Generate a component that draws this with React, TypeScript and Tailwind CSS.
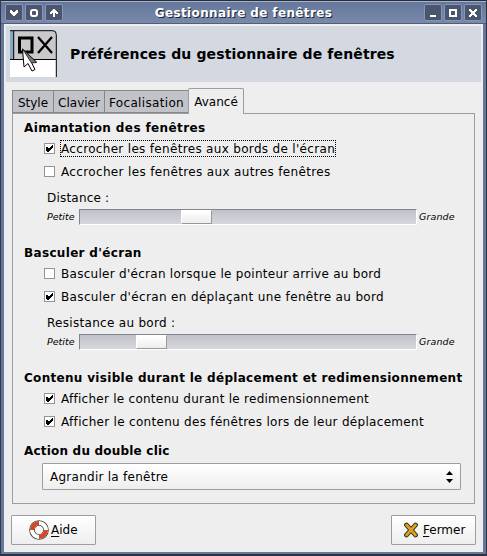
import type { ReactNode } from "react";

function TitleButton({ kind }: { kind: "down" | "ring" | "up" | "min" | "max" | "close" }) {
  return (
    <div className="flex h-[17px] w-[18px] items-center justify-center rounded-[2px] border border-[#8496bd] bg-[#4b556b]">
      <svg width="16" height="15" viewBox="0 0 16 15" fill="none" stroke="#fff" strokeWidth="2">
        {kind === "down" && <path d="M4 5h2v1h1v1h2V6h1V5h2v3h-1v1h-1v1H9v1H7v-1H6V9H5V8H4z" fill="#fff" stroke="none" />}
        {kind === "ring" && <rect x="5" y="5" width="6" height="6" rx="2" />}
        {kind === "up" && <path d="M7 4h2v1h1v1h1v1h1v2h-2V8H9v4H7V8H6v1H4V7h1V6h1V5h1z" fill="#fff" stroke="none" />}
        {kind === "min" && <path d="M5 11h6" />}
        {kind === "max" && <rect x="5" y="5" width="6" height="6" />}
        {kind === "close" && <path d="M4 4h2v1h1v1h2V5h1V4h2v2h-1v1h-1v2h1v1h1v2h-2v-1H9v-1H7v1H6v1H4v-2h1V9h1V7H5V6H4z" fill="#fff" stroke="none" />}
      </svg>
    </div>
  );
}

function Heading({ children, className }: { children: ReactNode; className: string }) {
  return <div className={`ml-[11px] flex items-center font-bold ${className}`}>{children}</div>;
}

function Check({ checked, focused, children, className = "" }: { checked?: boolean; focused?: boolean; children: ReactNode; className?: string }) {
  return (
    <div className={`ml-[31px] flex h-[23px] items-center ${className}`}>
      <div className="flex size-[11px] shrink-0 items-center justify-center border border-[#949496] bg-white">
        {checked && (
          <svg width="9" height="9" viewBox="0 0 9 9" shapeRendering="crispEdges">
            <path d="M1 3h2v1h1v1V4h1V3h1V2h1V1h1v3H7v1H6v1H5v1H4v1H2V7H1z" />
          </svg>
        )}
      </div>
      <div className={`ml-[5px] flex h-[17px] items-center border border-dotted ${focused ? "border-black" : "border-transparent"}`}>{children}</div>
    </div>
  );
}

function Slider({ knob }: { knob: string }) {
  return (
    <div className="ml-[34px] flex h-[16px] items-center">
      <span className="w-[32px] text-[9.5px] italic">Petite</span>
      <div className="h-[16px] w-[338px] border border-t-[#80858f] border-r-white border-b-white border-l-[#80858f] bg-linear-to-b from-[#c0c2c9] to-[#d6d7dd]">
        <div className={`h-[14px] w-[31px] border border-t-white border-r-[#98999c] border-b-[#98999c] border-l-white bg-linear-to-b from-white to-[#ededed] ${knob}`} />
      </div>
      <span className="ml-[2px] text-[9.5px] tracking-[0.1px] italic">Grande</span>
    </div>
  );
}

function WindowIcon() {
  return (
    <svg className="shrink-0" width="48" height="48" viewBox="0 0 48 48">
      <path d="M0 29h46v18H0z" fill="#fff" />
      <path d="M0 1h4v28H0z" fill="#86a9c3" />
      <path d="M4 1h39q3 0 3 3v25H4z" fill="#cac8ca" />
      <path d="M0 .7h43q3.300 0 3.300 4V47M0 29.500h46M3.700 1v28" fill="none" stroke="#000" />
      <rect x="9.500" y="8" width="12.500" height="14" fill="none" stroke="#000" strokeWidth="3" />
      <path d="M28 7l14 16M42 7L28 23" stroke="#000" strokeWidth="2.300" />
      <path d="M12.500 19l1.500 18 4-3.500 4 7.500 3-1.500-3.500-7 5-.5z" fill="#fff" stroke="#000" />
      <path d="M12.500 19l14 13.500-5 .5z" fill="#777" stroke="#222" strokeWidth=".8" />
    </svg>
  );
}

export default function App() {
  return (
    <div className="flex h-[556px] w-[487px] flex-col overflow-hidden border border-b-2 border-r-[#2c3340] border-b-[#2c3340] border-l-[#30384a] border-t-[#252b37] bg-[#65789b] font-['DejaVu_Sans',sans-serif] text-[12px] leading-[14px] whitespace-nowrap text-black">
      <div className="flex h-[23px] shrink-0 items-center border-t border-b border-t-[#a8b2c9] border-b-[#4f5e7c] bg-linear-to-b from-[#65779a] to-[#7989aa] px-[4px]">
        <div className="flex gap-[2px]"><TitleButton kind="down" /><TitleButton kind="ring" /><TitleButton kind="up" /></div>
        <div className="flex-1 pt-px text-center font-bold tracking-[0.37px] text-white [text-shadow:1px_1px_0_#1c2431]">Gestionnaire de fenêtres</div>
        <div className="flex gap-[2px]"><TitleButton kind="min" /><TitleButton kind="max" /><TitleButton kind="close" /></div>
      </div>
      <div className="mx-[3px] flex h-[528px] shrink-0 flex-col bg-[#eeeeee]">
        <div className="mx-[2px] mt-[2px] flex h-[56px] shrink-0 items-center bg-[#d4d8e1] pl-[4px]">
          <WindowIcon />
          <span className="ml-[12px] text-[14px] font-bold tracking-[0.13px]">Préférences du gestionnaire de fenêtres</span>
        </div>
        <div className="mt-[6px] ml-[8px] flex h-[25px] shrink-0 items-end">
          <div className="flex h-[23px] w-[42px] items-center justify-center border border-[#85868c] bg-[#c2c3c9] pt-[2px]">Style</div>
          <div className="-ml-px flex h-[23px] w-[52px] items-center justify-center border border-[#85868c] bg-[#c2c3c9] pt-[2px]">Clavier</div>
          <div className="-ml-px flex h-[23px] w-[85px] items-center justify-center border border-[#85868c] bg-[#c2c3c9] pt-[2px] tracking-[0.33px]">Focalisation</div>
          <div className="z-10 -mb-px -ml-px flex h-[26px] w-[56px] items-center justify-center rounded-t-[2px] border border-b-0 border-[#9c9d9f] bg-[#eeeeee]">Avancé</div>
        </div>
        <div className="ml-[8px] flex h-[391px] w-[463px] shrink-0 flex-col border border-[#9c9d9f]">
          <Heading className="mt-[5px] h-[17px] tracking-[0.39px]">Aimantation des fenêtres</Heading>
          <Check checked focused className="mt-px tracking-[0.32px]">Accrocher les fenêtres aux bords de l'écran</Check>
          <Check className="tracking-[0.35px]">Accrocher les fenêtres aux autres fenêtres</Check>
          <div className="mt-[8px] ml-[34px] h-[18px] tracking-[0.2px]">Distance :</div>
          <Slider knob="ml-[101px]" />
          <Heading className="mt-[19px] h-[18px] tracking-[0.33px]">Basculer d'écran</Heading>
          <Check className="tracking-[0.28px]">Basculer d'écran lorsque le pointeur arrive au bord</Check>
          <Check checked className="tracking-[0.35px]">Basculer d'écran en déplaçant une fenêtre au bord</Check>
          <div className="mt-[8px] ml-[34px] h-[18px] tracking-[0.3px]">Resistance au bord :</div>
          <Slider knob="ml-[56px]" />
          <Heading className="mt-[19px] h-[18px] tracking-[0.31px]">Contenu visible durant le déplacement et redimensionnement</Heading>
          <Check checked className="tracking-[0.26px]">Afficher le contenu durant le redimensionnement</Check>
          <Check checked className="tracking-[0.3px]">Afficher le contenu des fénêtres lors de leur déplacement</Check>
          <Heading className="mt-[9px] h-[18px] tracking-[0.2px]">Action du double clic</Heading>
          <div className="mt-[3px] ml-[29px] flex h-[27px] w-[419px] items-center justify-between rounded-[1px] border border-[#9c9d9f] bg-linear-to-b from-white to-[#eeeeee] pr-[7px] pl-[7px]">
            <span className="tracking-[0.26px]">Agrandir la fenêtre</span>
            <svg width="7" height="12" viewBox="0 0 7 12"><path d="M3.500 0L7 4H0zM0 8h7l-3.500 4z" /></svg>
          </div>
        </div>
        <div className="mt-[11px] ml-[7px] flex w-[465px] justify-between">
          <div className="flex h-[30px] w-[85px] items-center rounded-[1px] border border-[#9c9d9f] bg-linear-to-b from-white to-[#eeeeee] pl-[17px]">
            <svg width="20" height="20" viewBox="0 0 20 20">
              <circle cx="10" cy="10" r="7" fill="none" stroke="#444" strokeWidth="5.600" />
              <circle cx="10" cy="10" r="7" fill="none" stroke="#fff" strokeWidth="4" />
              <path d="M3 10a7 7 0 0 1 7-7M17 10a7 7 0 0 1-7 7" fill="none" stroke="#d84522" strokeWidth="4" />
            </svg>
            <span className="ml-[2px]"><span className="underline underline-offset-2">A</span>ide</span>
          </div>
          <div className="flex h-[30px] w-[85px] items-center rounded-[1px] border border-[#9c9d9f] bg-linear-to-b from-white to-[#eeeeee] pl-[11px]">
            <svg width="16" height="16" viewBox="0 0 16 16" fill="none" strokeLinecap="round">
              <path d="M3.500 3l9 10M12.500 3l-9 10" stroke="#302b20" strokeWidth="4.800" />
              <path d="M3.500 3l9 10M12.500 3l-9 10" stroke="#daa020" strokeWidth="2.800" />
            </svg>
            <span className="ml-[4px]"><span className="underline underline-offset-2">F</span>ermer</span>
          </div>
        </div>
      </div>
    </div>
  );
}
